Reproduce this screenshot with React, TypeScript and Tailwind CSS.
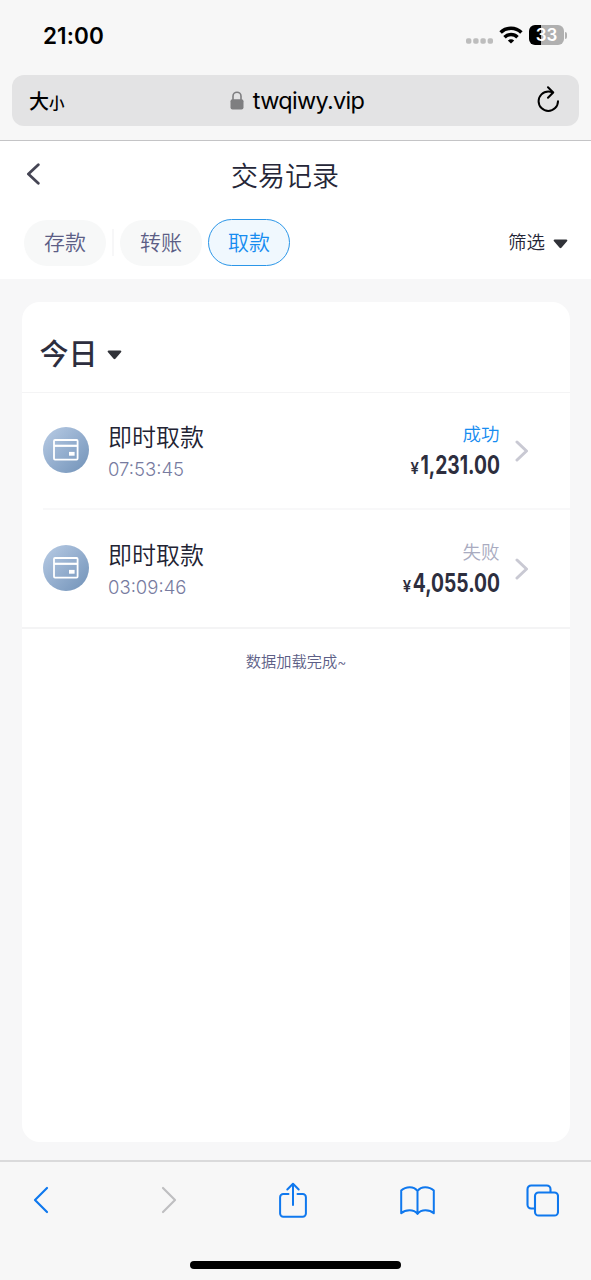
interface Transaction {
  id: number
  title: string
  time: string
  status: string
  success: boolean
  amount: string
}

const transactions: Transaction[] = [
  { id: 1, title: '即时取款', time: '07:53:45', status: '成功', success: true, amount: '1,231.00' },
  { id: 2, title: '即时取款', time: '03:09:46', status: '失败', success: false, amount: '4,055.00' },
]

function StatusBar() {
  return (
    <div className="h-[75px] shrink-0 flex justify-between pl-[43px] pr-[24px] pt-[21px]">
      <span className="h-[30px] leading-[30px] text-[22.5px] font-semibold tracking-[0.1px] text-black">21:00</span>
      <div className="h-[28px] flex items-center">
        <svg width="28" height="6" viewBox="0 0 28 6" fill="#bdbdbd" className="mt-[11px]">
          <rect x="0" y="0.3" width="5.4" height="5.4" rx="1.8" />
          <rect x="7.2" y="0.3" width="5.4" height="5.4" rx="1.8" />
          <rect x="14.4" y="0.3" width="5.4" height="5.4" rx="1.8" />
          <rect x="21.6" y="0.3" width="5.4" height="5.4" rx="1.8" />
        </svg>
        <svg width="24" height="18" viewBox="0 0 24 18" fill="none" stroke="#000" strokeWidth="3.5" className="ml-[5px]">
          <path d="M1.6 6.6a14.8 14.8 0 0 1 20.8 0" />
          <path d="M5.5 11.2a9.3 9.3 0 0 1 13 0" />
          <path d="M12 17.6 8.8 14.6a4.6 4.6 0 0 1 6.4 0z" fill="#000" stroke="none" />
        </svg>
        <div className="ml-[6px] w-[35px] h-[20px] rounded-[6px] bg-[linear-gradient(90deg,#000_34%,#b0b0b0_34%)] flex items-center justify-center text-white text-[17px] font-semibold leading-none">
          33
        </div>
        <div className="ml-[1px] w-[2px] h-[7px] rounded-r-full bg-[#b0b0b0]" />
      </div>
    </div>
  )
}

function AddressBar() {
  return (
    <div className="h-[66px] shrink-0 px-[12px] border-b border-[#c4c4c6]">
      <div className="h-[51px] rounded-[12px] bg-[#e3e3e4] grid grid-cols-[1fr_auto_1fr] items-center pl-[17px] pr-[19px] text-black">
        <div className="pt-[2px] font-medium leading-none">
          <span className="text-[20px]">大</span>
          <span className="text-[15.5px]">小</span>
        </div>
        <div className="flex items-center gap-[9px] pl-[5px]">
          <svg width="14" height="19" viewBox="0 0 14 19" fill="#7e7e80">
            <path d="M3 9V5.2a4 4 0 0 1 8 0V9" fill="none" stroke="#7e7e80" strokeWidth="1.6" />
            <rect x="0.5" y="8.2" width="13" height="10.3" rx="2" />
          </svg>
          <span className="text-[23.5px] leading-none tracking-[-0.7px]">twqiwy.vip</span>
        </div>
        <svg width="23" height="27" viewBox="0 0 23 27" fill="none" stroke="#000" strokeWidth="2" strokeLinecap="round" strokeLinejoin="round" className="justify-self-end -mt-[2px]">
          <path d="M21 15.2A9.7 9.7 0 1 1 11.3 5.5c1.4 0 2.9.3 4.2.8" />
          <path d="m11 1.2 5.2 5.3-5.2 5.3" />
        </svg>
      </div>
    </div>
  )
}

function Caret() {
  return (
    <svg width="15" height="10" viewBox="0 0 15 10" fill="#303238" className="mt-[2px]">
      <path d="M1.7.5h11.6c1 0 1.4 1 .7 1.7L8.4 8.7c-.5.6-1.3.6-1.8 0L1 2.2C.3 1.5.7.5 1.7.5z" />
    </svg>
  )
}

function PageHeader() {
  return (
    <div className="h-[138px] shrink-0 bg-white">
      <div className="h-[68px] grid grid-cols-[15px_1fr_36px] items-center px-[26px]">
        <svg width="15" height="22" viewBox="0 0 15 22" fill="none" stroke="#454554" strokeWidth="2.8" strokeLinecap="round" strokeLinejoin="round" className="-mt-[3px]">
          <path d="M12.3 1.8 2.4 11l9.9 9.2" />
        </svg>
        <h1 className="pt-[2px] text-center text-[27px] font-[350] leading-none text-[#252637]">交易记录</h1>
      </div>
      <div className="h-[70px] flex items-start justify-between pl-[24px] pr-[23px] pt-[10px]">
        <div className="flex items-center text-[21px] font-[350] leading-none text-[#5c5e86]">
          <button className="w-[82px] h-[46px] rounded-full bg-[#f7f8f8]">存款</button>
          <div className="mx-[6px] w-[2px] h-[27px] bg-[#f7f7f8]" />
          <button className="w-[82px] h-[46px] rounded-full bg-[#f7f8f8]">转账</button>
          <button className="ml-[6px] w-[82px] h-[47px] rounded-full border-[1.5px] border-[#2b96e8] bg-[#f0f8fe] text-[#168cf0]">取款</button>
        </div>
        <button className="h-[48px] flex items-center gap-[8px] text-[18.5px] font-[350] text-[#252637]">
          筛选
          <Caret />
        </button>
      </div>
    </div>
  )
}

function CardIcon() {
  return (
    <div className="size-[46px] -mt-[2px] shrink-0 rounded-full bg-linear-to-br from-[#b9cce5] to-[#7192b8] flex items-center justify-center">
      <svg width="26" height="22" viewBox="0 0 26 22" fill="none" stroke="#fff" strokeWidth="1.8">
        <rect x="1" y="1" width="23.6" height="19.6" rx="1" />
        <path d="M1 6.8h23.6" strokeWidth="2.2" />
        <rect x="16" y="12.9" width="5.6" height="3.8" fill="#fff" stroke="none" />
      </svg>
    </div>
  )
}

function TransactionRow({ item }: { item: Transaction }) {
  return (
    <div className="flex-1 flex items-center pr-[41px]">
      <CardIcon />
      <div className="ml-[19px] flex-1">
        <p className="h-[33px] pt-[2px] leading-[34px] text-[24px] font-[350] text-[#222333]">{item.title}</p>
        <p className="h-[30px] pt-[1px] leading-[32px] text-[18.5px] font-light text-[#777ba0]">{item.time}</p>
      </div>
      <div className="-mt-[2px] flex flex-col items-end">
        <p className={`h-[30px] leading-[30px] text-[18.5px] font-[350] ${item.success ? 'text-[#168cf0]' : 'text-[#a9abc0]'}`}>
          {item.status}
        </p>
        <p className="h-[32px] flex items-baseline origin-right scale-x-[0.77] leading-[33px] text-[#2d2e3e]">
          <span className="mr-[2px] text-[15.5px] font-semibold inline-block origin-right scale-x-[1.25]">¥</span>
          <span className="text-[25px] font-bold">{item.amount}</span>
        </p>
      </div>
      <svg width="14" height="22" viewBox="0 0 14 22" fill="none" stroke="#c9c9d3" strokeWidth="3" strokeLinecap="round" strokeLinejoin="round" className="ml-[15px]">
        <path d="m2 2 9.5 9L2 20" />
      </svg>
    </div>
  )
}

function TransactionList() {
  return (
    <div className="flex-1 px-[21.5px] pt-[23px] pb-[18px] bg-[#f7f7f8]">
      <div className="h-full rounded-[18px] bg-white">
        <div className="h-[91px] flex items-center gap-[9px] pl-[18px] pt-[14px] border-b border-[#f4f4f5] text-[29px] font-medium leading-none text-[#2d2e3e]">
          今日
          <Caret />
        </div>
        <div className="pl-[21.5px] border-b-2 border-[#f4f4f5]">
          <div className="h-[117px] flex border-b-2 border-[#f8f8f9]">
            <TransactionRow item={transactions[0]} />
          </div>
          <div className="h-[117px] flex">
            <TransactionRow item={transactions[1]} />
          </div>
        </div>
        <p className="mt-[22px] text-center text-[15.25px] leading-[22px] font-[350] text-[#5c5e86]">
          数据加载完成<span className="text-[14px] tracking-[-1px]">~</span>
        </p>
      </div>
    </div>
  )
}

function BrowserToolbar() {
  return (
    <div className="h-[120px] shrink-0 flex flex-col border-t-2 border-[#dadadb] bg-[#f7f7f7]">
      <div className="h-[76px] flex items-center pl-[33px] text-[#0f78ee]">
        <svg width="16" height="28" viewBox="0 0 16 28" fill="none" stroke="currentColor" strokeWidth="2.2" strokeLinecap="round" strokeLinejoin="round">
          <path d="M14 2 2 14l12 12" />
        </svg>
        <svg width="16" height="28" viewBox="0 0 16 28" fill="none" stroke="#bfbfc1" strokeWidth="2.2" strokeLinecap="round" strokeLinejoin="round" className="ml-[112px]">
          <path d="m2 2 12 12L2 26" />
        </svg>
        <svg width="28" height="36" viewBox="0 0 28 36" fill="none" stroke="currentColor" strokeWidth="2" strokeLinecap="round" strokeLinejoin="round" className="ml-[101.5px]">
          <path d="M9.5 12H4.3A3.2 3.2 0 0 0 1.1 15.2v16.3a3.2 3.2 0 0 0 3.2 3.2h19.4a3.2 3.2 0 0 0 3.2-3.2V15.2a3.2 3.2 0 0 0-3.2-3.2h-5.2" />
          <path d="M14 23V2M8.3 7.5 14 1.8l5.7 5.7" />
        </svg>
        <svg width="35" height="29" viewBox="0 0 35 29" fill="none" stroke="currentColor" strokeWidth="2" strokeLinecap="round" strokeLinejoin="round" className="ml-[93.5px]">
          <path d="M17.5 5C15.7 2.6 13 1.2 9.8 1.2 6.5 1.2 3.5 2.3 1.2 4.5v22.8c2.2-2 5-3 8.3-3s6.1 1.1 8 3.6c1.9-2.5 4.7-3.6 8-3.6s6.1 1 8.3 3V4.5c-2.3-2.2-5.3-3.3-8.6-3.3-3.2 0-5.9 1.4-7.7 3.8v22.5" />
        </svg>
        <svg width="33" height="33" viewBox="0 0 33 33" fill="none" stroke="currentColor" strokeWidth="2.1" className="ml-[91px]">
          <rect x="9" y="8.5" width="23" height="23" rx="3.6" />
          <path d="M9 24.5H5.2a3.7 3.7 0 0 1-3.7-3.7V5.2a3.7 3.7 0 0 1 3.7-3.7h15.6a3.7 3.7 0 0 1 3.7 3.7v3.3" />
        </svg>
      </div>
      <div className="mt-[23px] ml-[190px] w-[211px] h-[8px] rounded-full bg-black" />
    </div>
  )
}

export default function App() {
  return (
    <div className="w-[591px] h-[1280px] overflow-hidden flex flex-col bg-[#f7f7f7] font-[Inter,'Noto_Sans_CJK_SC',sans-serif]">
      <StatusBar />
      <AddressBar />
      <PageHeader />
      <TransactionList />
      <BrowserToolbar />
    </div>
  )
}
